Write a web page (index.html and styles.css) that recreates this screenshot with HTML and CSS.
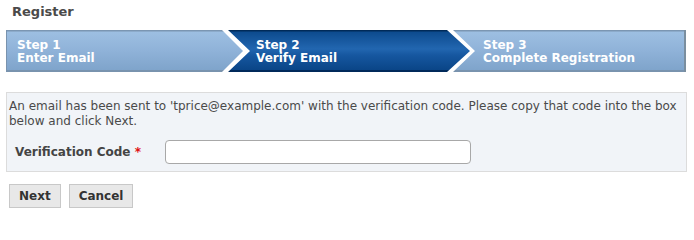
FILE: index.html
```html
<!DOCTYPE html>
<html>
<head>
<meta charset="utf-8">
<link rel="stylesheet" href="styles.css">
</head>
<body>
<div class="page">
  <h1 class="title">Register</h1>
  <div class="steps">
    <div class="step step-first">
      <div class="step-num">Step 1</div>
      <div class="step-name">Enter Email</div>
    </div>
    <div class="step step-mid step-active">
      <div class="step-num">Step 2</div>
      <div class="step-name">Verify Email</div>
    </div>
    <div class="step step-last">
      <div class="step-num">Step 3</div>
      <div class="step-name">Complete Registration</div>
    </div>
  </div>
  <div class="panel">
    <p class="msg">An email has been sent to 'tprice@example.com' with the verification code. Please copy that code into the box below and click Next.</p>
    <div class="field">
      <label class="label">Verification Code <span class="req">*</span></label>
      <input class="input" type="text">
    </div>
  </div>
  <div class="actions">
    <button class="btn">Next</button>
    <button class="btn">Cancel</button>
  </div>
</div>
</body>
</html>
```
FILE: styles.css
```css
html, body {
  margin: 0;
  padding: 0;
  background: #ffffff;
}
.page {
  padding: 4px 7px 0 6px;
  font-family: "DejaVu Sans", Verdana, sans-serif;
  font-size: 12px;
  color: #444;
}
.title {
  margin: 0 0 10px 0;
  padding-left: 6px;
  font-size: 13px;
  line-height: 16px;
  font-weight: bold;
  color: #4a4a4a;
}
.steps {
  display: flex;
  height: 42px;
}
.step {
  box-sizing: border-box;
  height: 42px;
  padding-top: 9px;
  color: #fff;
  font-weight: bold;
  font-size: 12px;
  line-height: 13px;
  background: linear-gradient(to bottom, #7b96b2 0, #7b96b2 1px, #9dbfe2 2px, #8fb2d8 50%, #7fa4cb 95%, #7993ae 95.5%, #7993ae 100%);
}
.step-first {
  width: 237px;
  padding-left: 10px;
  clip-path: polygon(0 0, 216px 0, 237px 21px, 216px 42px, 0 42px);
  border-left: 1px solid #7993ae;
}
.step-mid {
  width: 242px;
  margin-left: -15px;
  padding-left: 28px;
  clip-path: polygon(0 0, 219px 0, 242px 21px, 219px 42px, 0 42px, 22px 21px);
}
.step-last {
  width: 233px;
  margin-left: -17px;
  padding-left: 30px;
  clip-path: polygon(0 0, 100% 0, 100% 100%, 0 100%, 22px 21px);
  border-right: 2px solid #7a8e9f;
}
.step-active {
  background: linear-gradient(to bottom, #002a58 0, #002a58 1px, #0d4b8e 2px, #2266b0 45%, #1657a0 60%, #0a4587 95%, #00295a 95.5%, #00295a 100%);
}
.panel {
  margin-top: 20px;
  border: 1px solid #dcdcdc;
  background: #f1f4f8;
  padding: 6px 2px 7px 2px;
}
.msg {
  margin: 0;
  line-height: 15px;
  color: #4a4a4a;
}
.field {
  display: flex;
  align-items: center;
  margin-top: 11px;
  padding-left: 6px;
}
.label {
  width: 150px;
  font-weight: bold;
  color: #444;
}
.req {
  color: #e01010;
}
.input {
  box-sizing: border-box;
  width: 306px;
  height: 24px;
  margin: 0;
  border: 1px solid #a8a8a8;
  border-radius: 4px;
  background: #fff;
}
.actions {
  display: flex;
  gap: 8px;
  margin-top: 12px;
  padding-left: 3px;
}
.btn {
  box-sizing: border-box;
  height: 24px;
  margin: 0;
  padding: 0 9px;
  border: 1px solid #c8c8c8;
  background: #e8e8e8;
  font-family: "DejaVu Sans", Verdana, sans-serif;
  font-size: 12px;
  font-weight: bold;
  color: #333;
}
```
